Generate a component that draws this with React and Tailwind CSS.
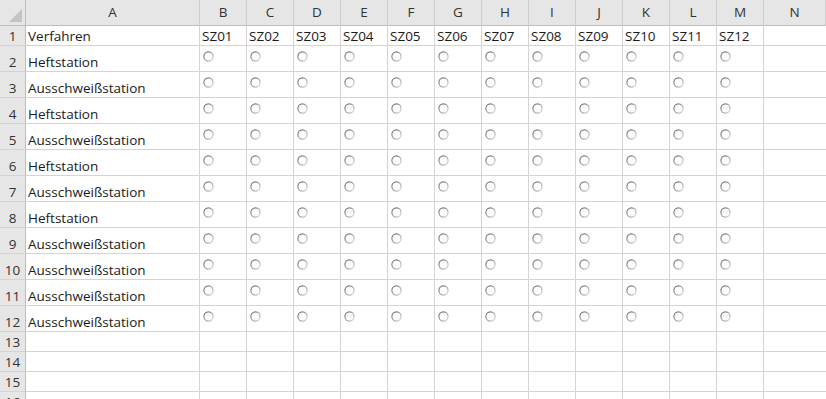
import React from "react";

const cols = ["A","B","C","D","E","F","G","H","I","J","K","L","M","N"];
const labels = ["Heftstation","Ausschweißstation","Heftstation","Ausschweißstation","Heftstation","Ausschweißstation","Heftstation","Ausschweißstation","Ausschweißstation","Ausschweißstation","Ausschweißstation"];

function Radio() {
  return (
    <svg width="11" height="11" viewBox="0 0 11 11" className="block">
      <defs>
        <linearGradient id="rg" x1="0" y1="0" x2="1" y2="1">
          <stop offset="0" stopColor="#5e5e5e" />
          <stop offset="0.55" stopColor="#a0a0a0" />
          <stop offset="1" stopColor="#dcdcdc" />
        </linearGradient>
      </defs>
      <circle cx="5.5" cy="5.5" r="4.6" fill="#fdfdfd" stroke="url(#rg)" strokeWidth="1.1" />
    </svg>
  );
}

const font = { fontFamily: "'Open Sans', 'Noto Sans', sans-serif" };

export default function App() {
  const gridCls = "grid grid-cols-[26px_174px_repeat(12,47px)_1fr]";
  return (
    <div className="w-[826px] h-[399px] overflow-hidden bg-white text-[#1a1a1a]" style={font}>
      {/* header */}
      <div className={`${gridCls} h-[26px] bg-[#e6e6e6] text-[#333] text-[13.5px]`}>
        <div className="relative border-r border-b border-[#bdbdbd]">
          <svg width="14" height="14" className="absolute left-[9px] top-[9px]">
            <polygon points="13,0 13,13 0,13" fill="#c4c4c4" />
          </svg>
        </div>
        {cols.map((c) => (
          <div key={c} className="flex items-center justify-center border-r border-b border-r-[#cfcfcf] border-b-[#bdbdbd]">
            {c}
          </div>
        ))}
      </div>
      {/* row 1 */}
      <div className={`${gridCls} h-[20px] text-[13.5px] leading-[18px]`}>
        <div className="flex items-end justify-center bg-[#e6e6e6] border-r border-b border-r-[#bdbdbd] border-b-[#d4d4d4] text-[#333]">1</div>
        <div className="flex items-end pl-[2px] border-r border-b border-[#d4d4d4]">Verfahren</div>
        {Array.from({ length: 12 }, (_, i) => (
          <div key={i} className="flex items-end pl-[2px] border-r border-b border-[#d4d4d4]">
            {"SZ" + String(i + 1).padStart(2, "0")}
          </div>
        ))}
        <div className="border-b border-[#d4d4d4]" />
      </div>
      {labels.map((l, r) => (
        <div key={r} className={`${gridCls} h-[26px] text-[13.5px] leading-[18px]`}>
          <div className="flex items-end justify-center bg-[#e6e6e6] border-r border-b border-r-[#bdbdbd] border-b-[#d4d4d4] text-[#333]">{r + 2}</div>
          <div className="flex items-end pl-[2px] border-r border-b border-[#d4d4d4]">{l}</div>
          {Array.from({ length: 12 }, (_, i) => (
            <div key={i} className="pl-[3px] pt-[5px] border-r border-b border-[#d4d4d4]">
              <Radio />
            </div>
          ))}
          <div className="border-b border-[#d4d4d4]" />
        </div>
      ))}
      {[13, 14, 15, 16].map((n) => (
        <div key={n} className={`${gridCls} h-[20px] text-[13.5px] leading-[18px]`}>
          <div className="flex items-end justify-center bg-[#e6e6e6] border-r border-b border-r-[#bdbdbd] border-b-[#d4d4d4] text-[#333]">{n}</div>
          <div className="border-r border-b border-[#d4d4d4]" />
          {Array.from({ length: 12 }, (_, i) => (
            <div key={i} className="border-r border-b border-[#d4d4d4]" />
          ))}
          <div className="border-b border-[#d4d4d4]" />
        </div>
      ))}
    </div>
  );
}
